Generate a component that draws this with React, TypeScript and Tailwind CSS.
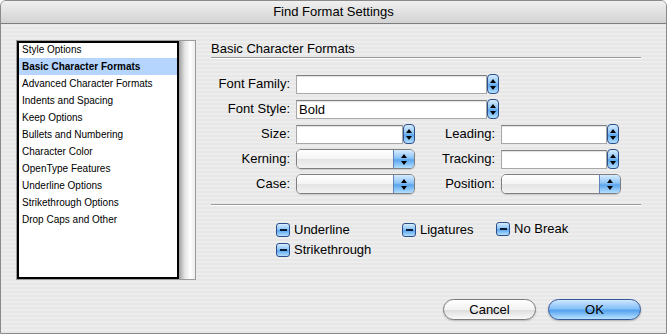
import React from 'react';

const stripes =
  'bg-[repeating-linear-gradient(180deg,#ededed_0px,#ededed_2px,#e7e7e7_2px,#e7e7e7_4px)]';

const listItems = [
  'Style Options',
  'Basic Character Formats',
  'Advanced Character Formats',
  'Indents and Spacing',
  'Keep Options',
  'Bullets and Numbering',
  'Character Color',
  'OpenType Features',
  'Underline Options',
  'Strikethrough Options',
  'Drop Caps and Other',
];

// Little aqua up/down stepper that sits to the right of a text field
const Stepper = () => (
  <div className="w-[12px] h-[20px] rounded-[4px] border border-[#2c4f8a] bg-[linear-gradient(180deg,#d6ecff_0%,#8cc4f6_45%,#5aa5ee_55%,#b4e0ff_100%)] flex flex-col items-center justify-center gap-[3px] shrink-0">
    <svg width="6" height="4" viewBox="0 0 6 4"><path d="M3 0L6 4H0Z" fill="#000" /></svg>
    <svg width="6" height="4" viewBox="0 0 6 4"><path d="M0 0H6L3 4Z" fill="#000" /></svg>
  </div>
);

const Field = ({ width, value }: { width: number; value?: string }) => (
  <div className="flex items-center h-[20px]">
    <div
      className="h-[19px] bg-white border border-[#a8a8a8] border-t-[#808080] shadow-[inset_0_1px_1px_rgba(0,0,0,0.12)] text-[13px] leading-[17px] pl-[2px]"
      style={{ width }}
    >
      {value}
    </div>
    <Stepper />
  </div>
);

const Popup = ({ width }: { width: number }) => (
  <div
    className="h-[20px] rounded-[5px] border border-[#7f7f7f] flex overflow-hidden shadow-[0_1px_1px_rgba(0,0,0,0.15)]"
    style={{ width }}
  >
    <div className="flex-1 bg-[linear-gradient(180deg,#ffffff_0%,#f4f4f4_50%,#e4e4e4_51%,#f2f2f2_100%)]" />
    <div className="w-[21px] border-l border-[#5f83b8] bg-[linear-gradient(180deg,#d6ecff_0%,#8cc4f6_45%,#5aa5ee_55%,#b4e0ff_100%)] flex flex-col items-center justify-center gap-[3px]">
      <svg width="6" height="4" viewBox="0 0 6 4"><path d="M3 0L6 4H0Z" fill="#000" /></svg>
      <svg width="6" height="4" viewBox="0 0 6 4"><path d="M0 0H6L3 4Z" fill="#000" /></svg>
    </div>
  </div>
);

const Label = ({ children }: { children: React.ReactNode }) => (
  <div className="text-[13px] text-black text-right leading-[20px] h-[20px]">{children}</div>
);

const Check = ({ label }: { label: string }) => (
  <div className="flex items-center gap-[4px] h-[20px]">
    <div className="w-[14px] h-[14px] rounded-[3px] border border-[#2c4f8a] bg-[linear-gradient(180deg,#d6ecff_0%,#8cc4f6_45%,#5aa5ee_55%,#b4e0ff_100%)] flex items-center justify-center">
      <div className="w-[7px] h-[2px] bg-[#0b1a33]" />
    </div>
    <span className="text-[13px] text-black">{label}</span>
  </div>
);

export default function App() {
  return (
    <div className="w-[667px] h-[335px] bg-white font-['Liberation_Sans',Arial,sans-serif]">
      <div className={`h-[334px] rounded-t-[6px] border border-[#8a8a8a] overflow-hidden flex flex-col ${stripes}`}>
        {/* title bar */}
        <div className="h-[23px] shrink-0 border-b border-[#7d7d7d] bg-[linear-gradient(180deg,#f0f0f0_0%,#dedede_60%,#d2d2d2_100%)] flex items-center justify-center text-[13px] text-black">
          Find Format Settings
        </div>

        <div className="flex pl-[15px] pt-[16px]">
          {/* category list */}
          <div className="w-[180px] h-[240px] border border-[#9c9c9c] flex shrink-0">
            <div className="w-[162px] border-2 border-black bg-white overflow-hidden">
              <ul className="-mt-[2px]">
                {listItems.map((item) => (
                  <li
                    key={item}
                    className={`h-[17px] leading-[17px] pl-[3px] text-[10px] text-black ${
                      item === 'Basic Character Formats' ? 'bg-[#b5d5ff] font-bold' : ''
                    }`}
                  >
                    {item}
                  </li>
                ))}
              </ul>
            </div>
            <div className="flex-1 bg-[linear-gradient(90deg,#9e9e9e_0%,#e2e2e2_35%,#ffffff_70%,#ededed_100%)]" />
          </div>

          {/* right panel */}
          <div className="ml-[15px] w-[430px] flex flex-col">
            <div className="h-[18px] border-b border-[#9a9a9a] shadow-[0_1px_0_#ffffff] text-[13px] text-black leading-[16px] pt-[1px]">
              Basic Character Formats
            </div>

            <div className="mt-[16px] grid grid-cols-[79px_119px_74px_120px] gap-x-[6px] gap-y-[5px]">
              <Label>Font Family:</Label>
              <div className="col-span-3">
                <Field width={191} />
              </div>
              <Label>Font Style:</Label>
              <div className="col-span-3">
                <Field width={191} value="Bold" />
              </div>
              <Label>Size:</Label>
              <Field width={107} />
              <Label>Leading:</Label>
              <Field width={106} />
              <Label>Kerning:</Label>
              <Popup width={119} />
              <Label>Tracking:</Label>
              <Field width={106} />
              <Label>Case:</Label>
              <Popup width={119} />
              <Label>Position:</Label>
              <Popup width={120} />
            </div>

            <div className="mt-[10px] border-t border-[#9a9a9a] shadow-[0_1px_0_#ffffff]" />

            <div className="mt-[15px] pl-[65px] grid grid-cols-[126px_94px_120px]">
              <Check label="Underline" />
              <Check label="Ligatures" />
              <div className="-mt-[1px]">
                <Check label="No Break" />
              </div>
              <Check label="Strikethrough" />
            </div>
          </div>
        </div>

        {/* buttons */}
        <div className="mt-[19px] flex justify-end gap-[12px] pr-[25px]">
          <button className="w-[93px] h-[21px] rounded-full border border-[#7a7a7a] bg-[linear-gradient(180deg,#ffffff_0%,#f2f2f2_50%,#dedede_55%,#fafafa_100%)] text-[13px] text-black shadow-[0_1px_2px_rgba(0,0,0,0.2)]">
            Cancel
          </button>
          <button className="w-[93px] h-[21px] rounded-full border border-[#33569a] bg-[linear-gradient(180deg,#cfe8ff_0%,#86c0f6_45%,#56a2ee_55%,#b8e3ff_100%)] text-[13px] text-black shadow-[0_1px_2px_rgba(0,0,0,0.25)]">
            OK
          </button>
        </div>
      </div>
    </div>
  );
}
